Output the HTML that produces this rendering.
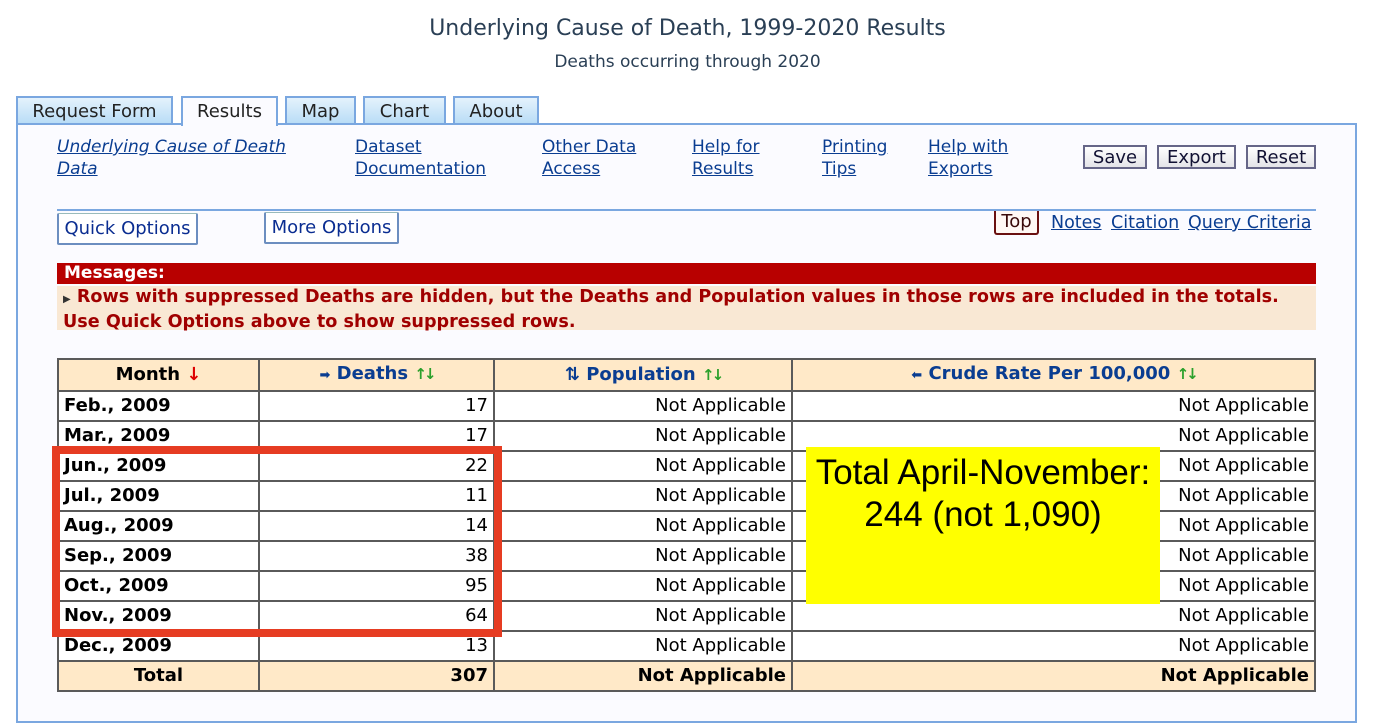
<!DOCTYPE html>
<html><head><meta charset="utf-8"><style>
body{margin:0;width:1378px;height:710px;background:#fff;font-family:"DejaVu Sans",Verdana,sans-serif;position:relative;overflow:hidden;color:#000}
.a{position:absolute}
h1{position:absolute;top:16px;left:0;width:1375px;text-align:center;font-weight:normal;font-size:22px;color:#2a3f55;margin:0}
.sub{top:52px;left:0;width:1375px;text-align:center;font-size:17px;color:#2a3f55}
.tab{position:absolute;top:96px;height:28px;border:2px solid #7aa7e0;border-bottom:none;background:linear-gradient(#e4f2fc,#b8dcf6);font-size:18px;color:#222;text-align:center;line-height:28px;box-sizing:border-box}
.panel{position:absolute;left:16px;top:123px;width:1341px;height:600px;border:2px solid #7aa7e0;background:#fbfbff;box-sizing:border-box}
.lk{position:absolute;font-size:17px;line-height:22px;color:#0a3d91;text-decoration:underline}
.btn{position:absolute;top:145px;height:24px;border:2px solid #666688;background:linear-gradient(#fff,#e4e4e8);font-size:18px;line-height:21px;text-align:center;box-sizing:border-box;color:#111133}
.ob{position:absolute;height:32px;border:2px solid #6c8ec0;border-top:1px solid #9bb;background:#fff;font-size:18px;line-height:30px;color:#0a2d91;text-align:center;box-sizing:border-box;border-radius:2px}
table{position:absolute;left:57px;top:358px;border-collapse:collapse;width:1259px}
td,th{border:2px solid #5a5a5a;height:28px;padding:0 5px;font-size:18px;line-height:28px;white-space:nowrap}
th{background:#ffe9c8;color:#0a3d91;font-weight:bold}
td{text-align:right;background:#fff}
td.m{text-align:left;font-weight:bold}
tr.t td{background:#ffe9c8;font-weight:bold}
.ar{color:#2ba02b;font-size:15px;letter-spacing:-3px;font-weight:900}
</style></head><body>
<h1>Underlying Cause of Death, 1999-2020 Results</h1>
<div class="a sub">Deaths occurring through 2020</div>
<div class="tab" style="left:16px;width:157px">Request Form</div>
<div class="tab" style="left:181px;width:97px;background:#fbfbff;height:30px;z-index:2">Results</div>
<div class="tab" style="left:285px;width:71px">Map</div>
<div class="tab" style="left:363px;width:83px">Chart</div>
<div class="tab" style="left:453px;width:86px">About</div>
<div class="panel"></div>
<div class="lk" style="left:57px;top:136px;font-style:italic">Underlying Cause of Death<br>Data</div>
<div class="lk" style="left:355px;top:136px">Dataset<br>Documentation</div>
<div class="lk" style="left:542px;top:136px">Other Data<br>Access</div>
<div class="lk" style="left:692px;top:136px">Help for<br>Results</div>
<div class="lk" style="left:822px;top:136px">Printing<br>Tips</div>
<div class="lk" style="left:928px;top:136px">Help with<br>Exports</div>
<div class="btn" style="left:1083px;width:64px">Save</div>
<div class="btn" style="left:1157px;width:79px">Export</div>
<div class="btn" style="left:1246px;width:70px">Reset</div>
<div class="a" style="left:57px;top:209px;width:1259px;height:2px;background:#7aa7e0"></div>
<div class="ob" style="left:57px;top:213px;width:141px">Quick Options</div>
<div class="ob" style="left:264px;top:212px;width:135px">More Options</div>
<div class="a" style="left:994px;top:211px;width:45px;height:24px;border:2px solid #6a1010;border-top:none;background:#fff8f4;color:#3a0a0a;font-size:18px;line-height:22px;text-align:center;box-sizing:border-box;border-radius:0 0 3px 3px">Top</div>
<div class="lk" style="left:1051px;top:212px;font-size:17.5px">Notes</div>
<div class="lk" style="left:1111px;top:212px;font-size:17.5px">Citation</div>
<div class="lk" style="left:1188px;top:212px;font-size:17.5px">Query Criteria</div>
<div class="a" style="left:57px;top:263px;width:1259px;height:21px;background:#b80000;color:#fff;font-weight:bold;font-size:17px;line-height:21px;padding-left:7px;box-sizing:border-box">Messages:</div>
<div class="a" style="left:57px;top:286px;width:1259px;height:44px;background:#f9e8d4;color:#a00000;font-weight:bold;font-size:17.6px;line-height:22px;padding-left:6px;box-sizing:border-box;white-space:nowrap"><span style="color:#333;font-size:10px">▶</span> Rows with suppressed Deaths are hidden, but the Deaths and Population values in those rows are included in the totals.<br>Use Quick Options above to show suppressed rows.</div>
<table>
<tr><th style="width:189px;color:#000">Month <span style="color:#d00">↓</span></th><th style="width:223px"><span style="font-size:13px">➡</span> Deaths <span class="ar">↑↓</span></th><th style="width:286px"><span>⇅</span> Population <span class="ar">↑↓</span></th><th><span style="font-size:13px">⬅</span> Crude Rate Per 100,000 <span class="ar">↑↓</span></th></tr>
<tr><td class="m">Feb., 2009</td><td>17</td><td>Not Applicable</td><td>Not Applicable</td></tr>
<tr><td class="m">Mar., 2009</td><td>17</td><td>Not Applicable</td><td>Not Applicable</td></tr>
<tr><td class="m">Jun., 2009</td><td>22</td><td>Not Applicable</td><td>Not Applicable</td></tr>
<tr><td class="m">Jul., 2009</td><td>11</td><td>Not Applicable</td><td>Not Applicable</td></tr>
<tr><td class="m">Aug., 2009</td><td>14</td><td>Not Applicable</td><td>Not Applicable</td></tr>
<tr><td class="m">Sep., 2009</td><td>38</td><td>Not Applicable</td><td>Not Applicable</td></tr>
<tr><td class="m">Oct., 2009</td><td>95</td><td>Not Applicable</td><td>Not Applicable</td></tr>
<tr><td class="m">Nov., 2009</td><td>64</td><td>Not Applicable</td><td>Not Applicable</td></tr>
<tr><td class="m">Dec., 2009</td><td>13</td><td>Not Applicable</td><td>Not Applicable</td></tr>
<tr class="t"><td style="text-align:center">Total</td><td>307</td><td>Not Applicable</td><td>Not Applicable</td></tr>
</table>
<div class="a" style="left:52px;top:446px;width:450px;height:191px;border:8px solid #e63c22;box-sizing:border-box"></div>
<div class="a" style="left:806px;top:447px;width:354px;height:157px;background:#ffff00;font-family:'Liberation Sans',Arial,sans-serif;font-size:35px;line-height:42px;text-align:center;padding-top:5px;box-sizing:border-box">Total April-November:<br>244 (not 1,090)</div>
</body></html>
